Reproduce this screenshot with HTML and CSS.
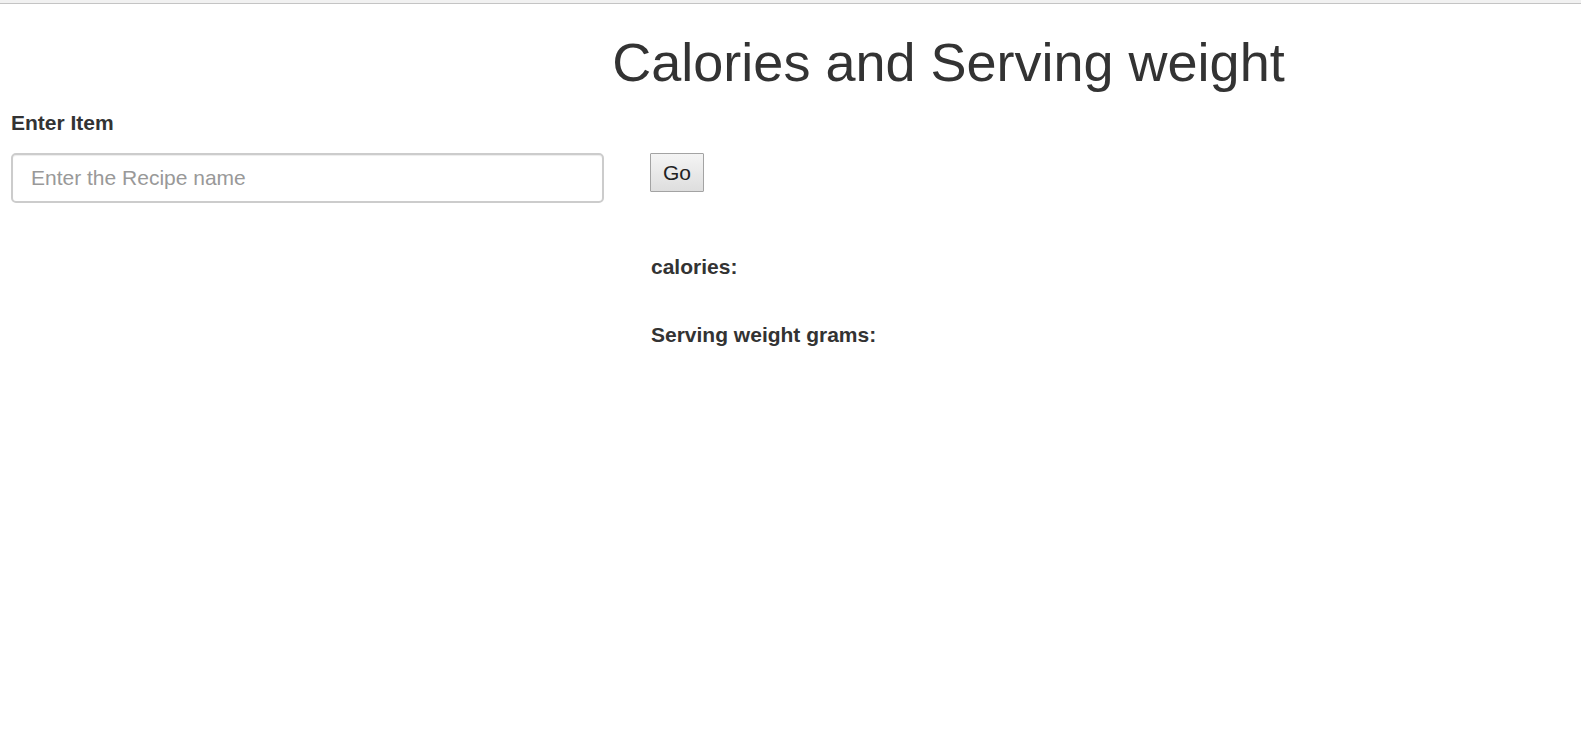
FILE: index.html
```html
<!DOCTYPE html>
<html lang="en">
<head>
<meta charset="utf-8">
<title>Calories and Serving weight</title>
<link rel="stylesheet" href="styles.css">
</head>
<body>
<div class="topbar"></div>
<h1 class="title">Calories and Serving weight</h1>
<div class="row">
  <div class="col-left">
    <label class="field-label" for="item">Enter Item</label>
    <input id="item" class="field-input" type="text" placeholder="Enter the Recipe name">
  </div>
  <div class="col-right">
    <button class="go-btn" type="button">Go</button>
    <div class="result first">calories:</div>
    <div class="result second">Serving weight grams:</div>
  </div>
</div>
</body>
</html>
```
FILE: styles.css
```css
html, body {
  margin: 0;
  padding: 0;
  background: #fff;
}
body {
  font-family: "Liberation Sans", Arial, Helvetica, sans-serif;
  color: #333;
}
.topbar {
  height: 3px;
  background: #f1f1f1;
  border-bottom: 1px solid #c4c4c4;
}
.title {
  margin: 29px 0 0 0;
  padding-left: 316px;
  text-align: center;
  font-size: 54px;
  font-weight: normal;
  line-height: 1.1;
  color: #333;
}
.row {
  display: flex;
  gap: 46px;
  padding-left: 11px;
  margin-top: 19px;
}
.col-left {
  width: 593px;
  display: flex;
  flex-direction: column;
}
.field-label {
  font-size: 21px;
  font-weight: bold;
  line-height: 23px;
  color: #333;
}
.field-input {
  box-sizing: border-box;
  margin-top: 19px;
  width: 593px;
  height: 50px;
  padding: 0 18px;
  font-family: "Liberation Sans", Arial, sans-serif;
  font-size: 21px;
  color: #555;
  border: 2px solid #ccc;
  border-radius: 5px;
  box-shadow: inset 0 1px 1px rgba(0,0,0,0.075);
  outline: none;
}
.field-input::placeholder {
  color: #999;
}
.col-right {
  display: flex;
  flex-direction: column;
  align-items: flex-start;
}
.go-btn {
  margin-top: 42px;
  width: 54px;
  height: 39px;
  padding: 0;
  font-family: "Liberation Sans", Arial, sans-serif;
  font-size: 21px;
  color: #222;
  background: linear-gradient(#f4f4f4, #dedede);
  border: 1px solid #a3a3a3;
  border-radius: 1px;
}
.result {
  font-size: 21px;
  font-weight: bold;
  line-height: 23px;
  color: #333;
  padding-left: 1px;
}
.result.first {
  margin-top: 63px;
}
.result.second {
  margin-top: 45px;
}
```
